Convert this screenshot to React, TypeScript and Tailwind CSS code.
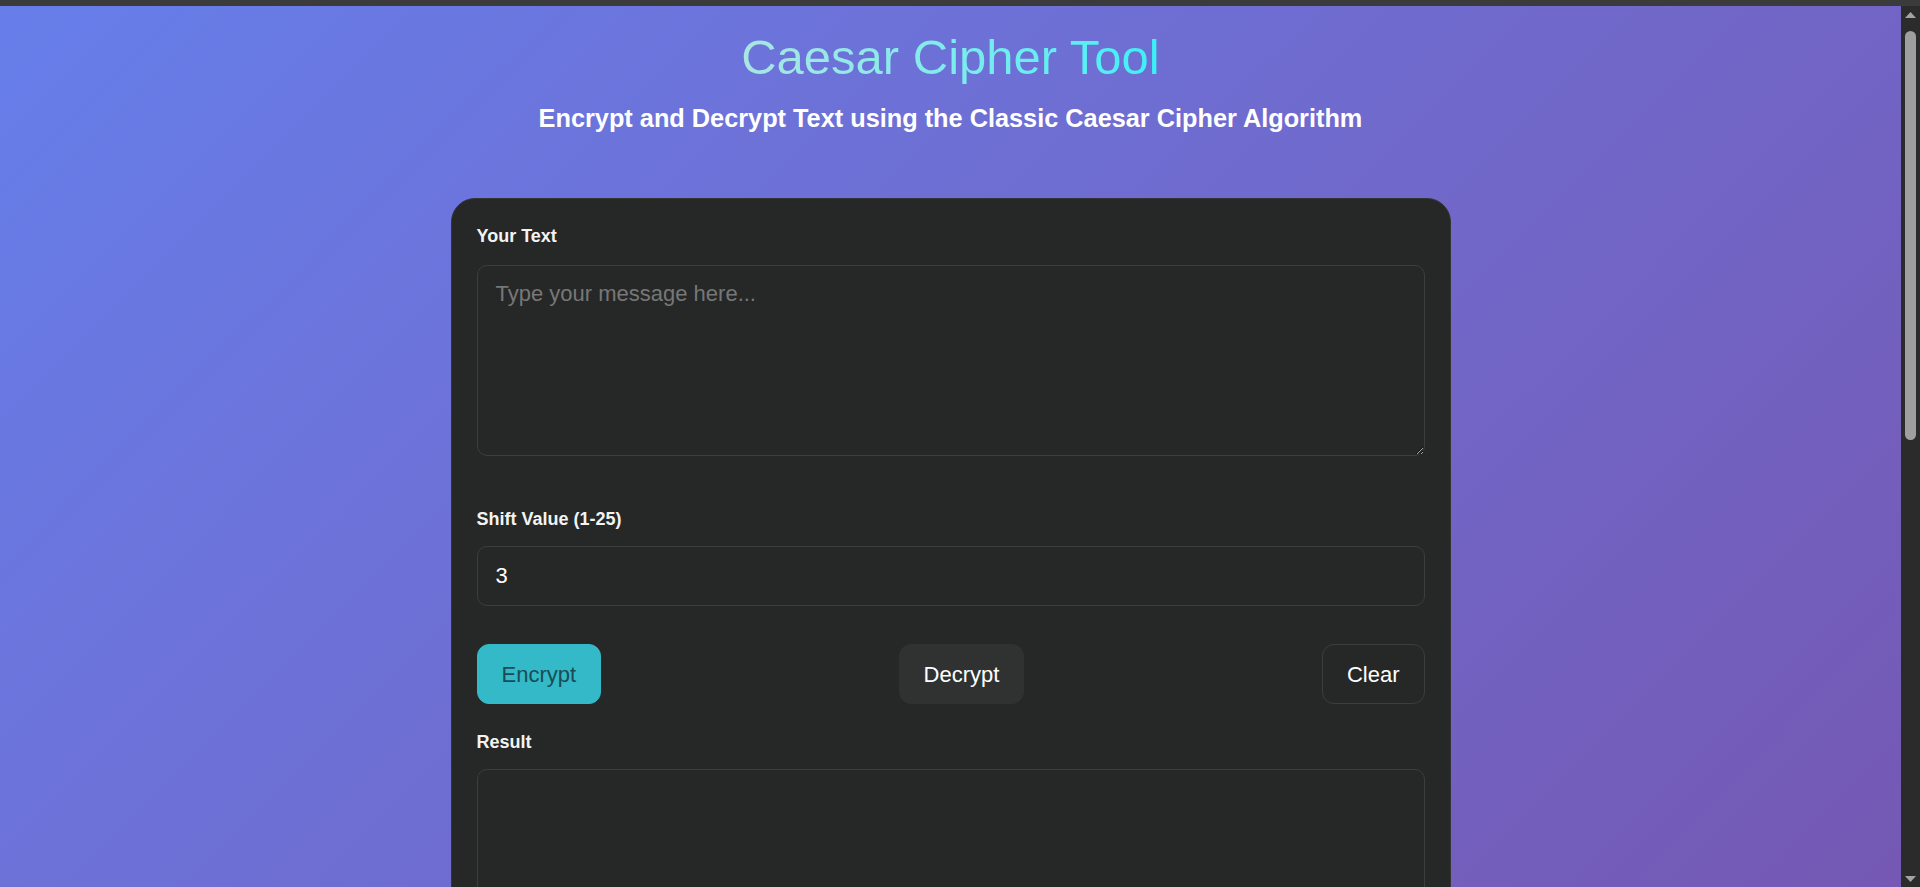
import { useState } from "react";

function shiftText(text: string, shift: number) {
    return text.replace(/[a-z]/gi, (ch) => {
        const base = ch <= "Z" ? 65 : 97;
        return String.fromCharCode(((ch.charCodeAt(0) - base + shift + 26 * 2) % 26) + base);
    });
}

function Scrollbar() {
    return (
        <div className="w-[19px] shrink-0 bg-[#2b2b2b] flex flex-col items-center">
            <div className="h-[17px] w-full flex items-center justify-center">
                <svg width="11" height="6" viewBox="0 0 11 6">
                    <path d="M5.5 0 L11 6 L0 6 Z" fill="#a3a3a3" />
                </svg>
            </div>
            <div className="mt-[8px] h-[409px] w-[11px] rounded-full bg-[#9f9f9f]" />
            <div className="flex-1" />
            <div className="h-[17px] w-full flex items-center justify-center">
                <svg width="11" height="6" viewBox="0 0 11 6">
                    <path d="M0 0 L11 0 L5.5 6 Z" fill="#a3a3a3" />
                </svg>
            </div>
        </div>
    );
}

export default function App() {
    const [text, setText] = useState("");
    const [shift, setShift] = useState("3");
    const [result, setResult] = useState("");

    const run = (dir: number) => {
        const n = Math.min(25, Math.max(1, parseInt(shift) || 0));
        setResult(shiftText(text, n * dir));
    };

    const clear = () => {
        setText("");
        setResult("");
    };

    return (
        <div className="h-screen flex flex-col font-['Liberation_Sans',Arial,sans-serif]">
            <div className="h-[6px] shrink-0 bg-[#3b3b3b]" />

            <div className="flex-1 min-h-0 flex">
                <div className="flex-1 overflow-y-auto scheme-dark">
                    <div className="min-h-[1823px] bg-linear-135 from-[#667eea] to-[#764ba2] pt-[24px] px-5">
                        <header className="text-center">
                            <h1 className="text-[49px] leading-[55px] font-normal bg-linear-to-r from-[#a8e6e2] to-[#38f0f6] bg-clip-text text-transparent inline-block">
                                Caesar Cipher Tool
                            </h1>
                            <p className="mt-[19px] text-[25.3px] leading-[28px] font-bold text-white">
                                Encrypt and Decrypt Text using the Classic Caesar Cipher Algorithm
                            </p>
                        </header>

                        <div className="mt-[66px] mx-auto max-w-[1000px] bg-[#262827] border border-[#333535] rounded-[24px] px-[25px] pt-[27px] pb-[25px]">
                            <label className="block text-[18px] leading-[21px] font-bold text-[#f3f3f3] mb-[18px]">Your Text</label>
                            <textarea
                                value={text}
                                onChange={(e) => setText(e.target.value)}
                                placeholder="Type your message here..."
                                className="block w-full h-[191px] bg-[#262827] border border-[#3c3e3e] rounded-[10px] px-[18px] pt-[15px] pb-[13px] text-[22px] leading-[25px] text-white placeholder:text-[#777] outline-none"
                            />

                            <label className="block mt-[53px] text-[18px] leading-[21px] font-bold text-[#f3f3f3] mb-[16px]">Shift Value (1-25)</label>
                            <input
                                type="text"
                                value={shift}
                                onChange={(e) => setShift(e.target.value)}
                                className="block w-full h-[60px] bg-[#262827] border border-[#3c3e3e] rounded-[10px] px-[18px] text-[22px] text-white outline-none"
                            />

                            <div className="mt-[38px] flex items-center justify-between">
                                <button
                                    onClick={() => run(1)}
                                    className="h-[60px] px-6 rounded-[12px] border border-[#33b9c7] bg-[#33b9c7] text-[22px] text-[#1a4c55]"
                                >
                                    Encrypt
                                </button>
                                <button
                                    onClick={() => run(-1)}
                                    className="h-[60px] px-6 rounded-[12px] border border-[#303232] bg-[#303232] text-[22px] text-white"
                                >
                                    Decrypt
                                </button>
                                <button
                                    onClick={clear}
                                    className="h-[60px] px-6 rounded-[12px] border border-[#3c3e3e] bg-transparent text-[22px] text-white"
                                >
                                    Clear
                                </button>
                            </div>

                            <label className="block mt-[28px] text-[18px] leading-[21px] font-bold text-[#f3f3f3] mb-[16px]">Result</label>
                            <textarea
                                readOnly
                                value={result}
                                className="block w-full h-[191px] bg-[#262827] border border-[#3c3e3e] rounded-[10px] px-[18px] py-[13px] text-[22px] leading-[25px] text-white outline-none"
                            />
                        </div>
                    </div>
                </div>
                <Scrollbar />
            </div>
        </div>
    );
}
